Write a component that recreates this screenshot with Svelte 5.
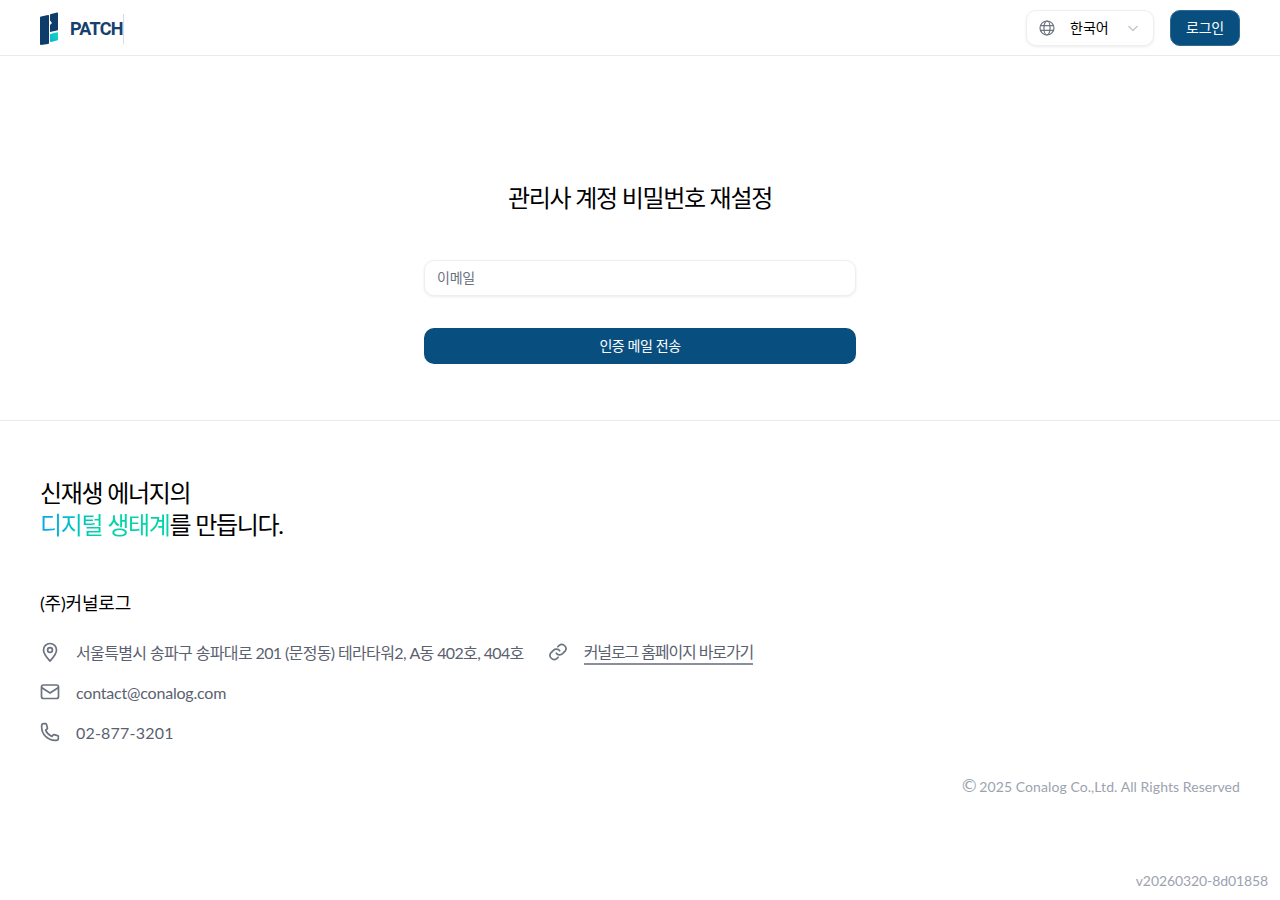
<script>
	let email = $state('');
</script>

<div class="page">
	<header class="topbar">
		<a class="logo" href="#home">
			<svg width="19" height="33" viewBox="0 0 19 33" aria-hidden="true">
				<defs>
					<linearGradient id="tealMark" x1="1" y1="0" x2="0" y2="1">
						<stop offset="0" stop-color="#12dcb4" />
						<stop offset="1" stop-color="#10b0e0" />
					</linearGradient>
				</defs>
				<path d="M1 4.500 L8 3 Q9 2.800 9 3.800 V31 Q9 31.800 8 32 L1 33 Q0 33 0 32 V5.500 Q0 4.700 1 4.500 Z" fill="#0f3d6b" />
				<path d="M11 2 L17 .500 Q18 .300 18 1.200 V17.500 Q18 18.300 17 18.500 L10 20 V13 L12 11 L10 8.500 V3 Q10 2.200 11 2 Z" fill="#0f3d6b" />
				<path d="M11 21.800 L17 20.300 Q18 20.100 18 21.100 V27.500 Q18 28.300 17 28.500 L11 30 Q10 30.200 10 29.200 V22.800 Q10 22 11 21.800 Z" fill="url(#tealMark)" />
			</svg>
			<span class="logo-text">PATCH</span>
		</a>

		<div class="actions">
			<button class="lang" type="button">
				<svg class="globe" width="16" height="16" viewBox="0 0 24 24" fill="none" stroke="#6b7280" stroke-width="1.800">
					<circle cx="12" cy="12" r="10.500" />
					<ellipse cx="12" cy="12" rx="4.600" ry="10.500" />
					<path d="M2 8.500h20M2 15.500h20" />
				</svg>
				<span>한국어</span>
				<svg class="chev" width="12" height="12" viewBox="0 0 12 12" fill="none" stroke="#c4c8cf" stroke-width="1.500">
					<path d="M1.500 4l4.500 4.500L10.500 4" />
				</svg>
			</button>
			<button class="login" type="button">로그인</button>
		</div>
	</header>

	<main class="reset">
		<h1>관리사 계정 비밀번호 재설정</h1>
		<form class="reset-form" onsubmit={(e) => e.preventDefault()}>
			<input type="email" placeholder="이메일" bind:value={email} />
			<button type="submit">인증 메일 전송</button>
		</form>
	</main>

	<footer class="footer">
		<h2>신재생 에너지의<br /><em>디지털 생태계</em>를 만듭니다.</h2>

		<h3>(주)커널로그</h3>

		<div class="info">
			<div class="info-row">
				<div class="info-item">
					<svg width="20" height="20" viewBox="0 0 20 20" fill="none" stroke="#6b7280" stroke-width="1.700">
						<path d="M10 19c-1-1.200-6.500-6.500-6.500-11a6.500 6.500 0 0 1 13 0c0 4.500-5.500 9.800-6.500 11z" stroke-linejoin="round" />
						<circle cx="10" cy="8" r="2.400" />
					</svg>
					<span class="address">서울특별시 송파구 송파대로 201 (문정동) 테라타워2, A동 402호, 404호</span>
				</div>
				<div class="info-item">
					<svg width="20" height="20" viewBox="0 0 24 24" fill="none" stroke="#6b7280" stroke-width="2" stroke-linecap="round" stroke-linejoin="round">
						<path d="M10 13.500a5 5 0 0 0 7.500.5l3-3a5 5 0 0 0-7-7l-1.700 1.700" />
						<path d="M14 10.500a5 5 0 0 0-7.500-.5l-3 3a5 5 0 0 0 7 7l1.700-1.700" />
					</svg>
					<a class="home-link" href="#home">커널로그 홈페이지 바로가기</a>
				</div>
			</div>
			<div class="info-item">
				<svg width="20" height="20" viewBox="0 0 20 20" fill="none" stroke="#6b7280" stroke-width="1.700" stroke-linejoin="round">
					<rect x="1.500" y="3" width="17" height="13.500" rx="2" />
					<path d="M1.500 5.500l8.500 5.500 8.500-5.500" />
				</svg>
				<span class="mail">contact@conalog.com</span>
			</div>
			<div class="info-item">
				<svg width="20" height="20" viewBox="0 0 24 24" fill="none" stroke="#6b7280" stroke-width="2" stroke-linejoin="round">
					<path d="M2 4.500A2.500 2.500 0 0 1 4.500 2h2.200c.5 0 .9.300 1 .8l1.200 4.500c.1.400 0 .8-.4 1.100L6.700 9.700a14 14 0 0 0 7.600 7.600l1.300-1.800c.3-.4.700-.5 1.100-.4l4.500 1.200c.5.100.8.500.8 1v2.200a2.500 2.500 0 0 1-2.500 2.500H18C9.200 22 2 14.800 2 6z" />
				</svg>
				<span class="phone">02-877-3201</span>
			</div>
		</div>

		<p class="copy"><span class="copy-mark">©</span>2025 Conalog Co.,Ltd. All Rights Reserved</p>
	</footer>

	<div class="version">v20260320-8d01858</div>
</div>

<style>
	:global(body) {
		margin: 0;
		background: #fff;
		font-family: Lato, "Noto Sans CJK KR", sans-serif;
	}

	.page {
		height: 900px;
		display: flex;
		flex-direction: column;
		overflow: hidden;
	}

	.topbar {
		height: 55px;
		padding: 0 40px;
		display: flex;
		align-items: center;
		justify-content: space-between;
		border-bottom: 1px solid #e9eaec;
	}

	.logo {
		display: flex;
		align-items: center;
		gap: 11px;
		text-decoration: none;
		margin-top: 1px;
	}

	.logo-text {
		font-family: Roboto, sans-serif;
		font-weight: 700;
		font-size: 18px;
		letter-spacing: -0.8px;
		color: #16406f;
		border-right: 1px solid #d5dbe3;
		line-height: 30px;
		margin-top: 1px;
	}

	.actions {
		display: flex;
		align-items: center;
		gap: 16px;
	}

	.lang {
		width: 128px;
		height: 36px;
		box-sizing: border-box;
		padding: 0 14px 2px 12px;
		display: flex;
		align-items: center;
		background: #fff;
		border: 1px solid #eeeff1;
		border-radius: 10px;
		box-shadow: 0 1px 3px rgba(0, 0, 0, 0.08);
		font: inherit;
		font-size: 14px;
		color: #000;
	}

	.lang svg {
		margin-top: 2px;
	}

	.lang span {
		margin-left: 15px;
		flex: 1;
		text-align: left;
	}

	.login {
		width: 70px;
		height: 36px;
		border: 1px solid #2f6a94;
		border-radius: 10px;
		background: #084f80;
		color: #fff;
		font: inherit;
		font-size: 14px;
		letter-spacing: -0.2px;
		padding: 0 0 2px;
	}

	.reset {
		height: 365px;
		box-sizing: border-box;
		padding-top: 127px;
		display: flex;
		flex-direction: column;
		align-items: center;
		border-bottom: 1px solid #e9eaec;
	}

	.reset h1 {
		margin: 0;
		font-size: 24px;
		font-weight: 400;
		line-height: 30px;
		letter-spacing: -1.3px;
		color: #000;
	}

	.reset-form {
		width: 432px;
		margin-top: 47px;
		display: flex;
		flex-direction: column;
		gap: 32px;
	}

	.reset-form input {
		height: 36px;
		box-sizing: border-box;
		padding: 0 12px 2px;
		border: 1px solid #eeeff1;
		border-radius: 10px;
		box-shadow: 0 1px 3px rgba(0, 0, 0, 0.08);
		font: inherit;
		font-size: 14px;
		letter-spacing: -0.2px;
		outline: none;
	}

	.reset-form input::placeholder {
		color: #6b7280;
		opacity: 1;
	}

	.reset-form button {
		height: 36px;
		border: none;
		border-radius: 10px;
		background: #084f80;
		color: #fff;
		font: inherit;
		font-size: 14px;
		letter-spacing: -0.4px;
		padding: 0 0 2px;
	}

	.footer {
		padding: 56px 40px 0;
	}

	.footer h2 {
		margin: 0;
		font-size: 24px;
		line-height: 32px;
		font-weight: 400;
		letter-spacing: -1.3px;
		color: #000;
	}

	.footer em {
		font-style: normal;
		background: linear-gradient(90deg, #0ca5ec, #00d4a8 45%);
		-webkit-background-clip: text;
		background-clip: text;
		color: transparent;
	}

	.footer h3 {
		margin: 48px 0 0;
		font-size: 18px;
		line-height: 28px;
		font-weight: 400;
		letter-spacing: -0.2px;
		color: #000;
	}

	.info {
		margin-top: 24px;
		display: flex;
		flex-direction: column;
		gap: 16px;
		font-size: 16px;
		color: #5b6170;
	}

	.info-row {
		display: flex;
		gap: 24px;
	}

	.info-item {
		display: flex;
		align-items: center;
		gap: 16px;
		line-height: 24px;
	}

	.info-item svg {
		margin-bottom: 2px;
	}

	.address {
		letter-spacing: -0.63px;
	}

	.mail {
		letter-spacing: -0.2px;
	}

	.phone {
		letter-spacing: 0.2px;
	}

	.home-link {
		color: inherit;
		text-decoration: none;
		border-bottom: 2px solid #8b8f9c;
		line-height: 20px;
		letter-spacing: -1.1px;
		padding-bottom: 1px;
	}

	.copy {
		margin: 32px 0 0;
		text-align: right;
		font-size: 14px;
		line-height: 20px;
		letter-spacing: 0.08px;
		color: #9ca3af;
	}

	.copy-mark {
		font-family: "DejaVu Sans", sans-serif;
		font-size: 18px;
		line-height: 14px;
		margin-right: 1px;
	}

	.version {
		margin-top: auto;
		padding: 0 12px 9px 0;
		text-align: right;
		font-size: 14px;
		line-height: 20px;
		letter-spacing: -0.1px;
		color: #9ca3af;
	}
</style>
